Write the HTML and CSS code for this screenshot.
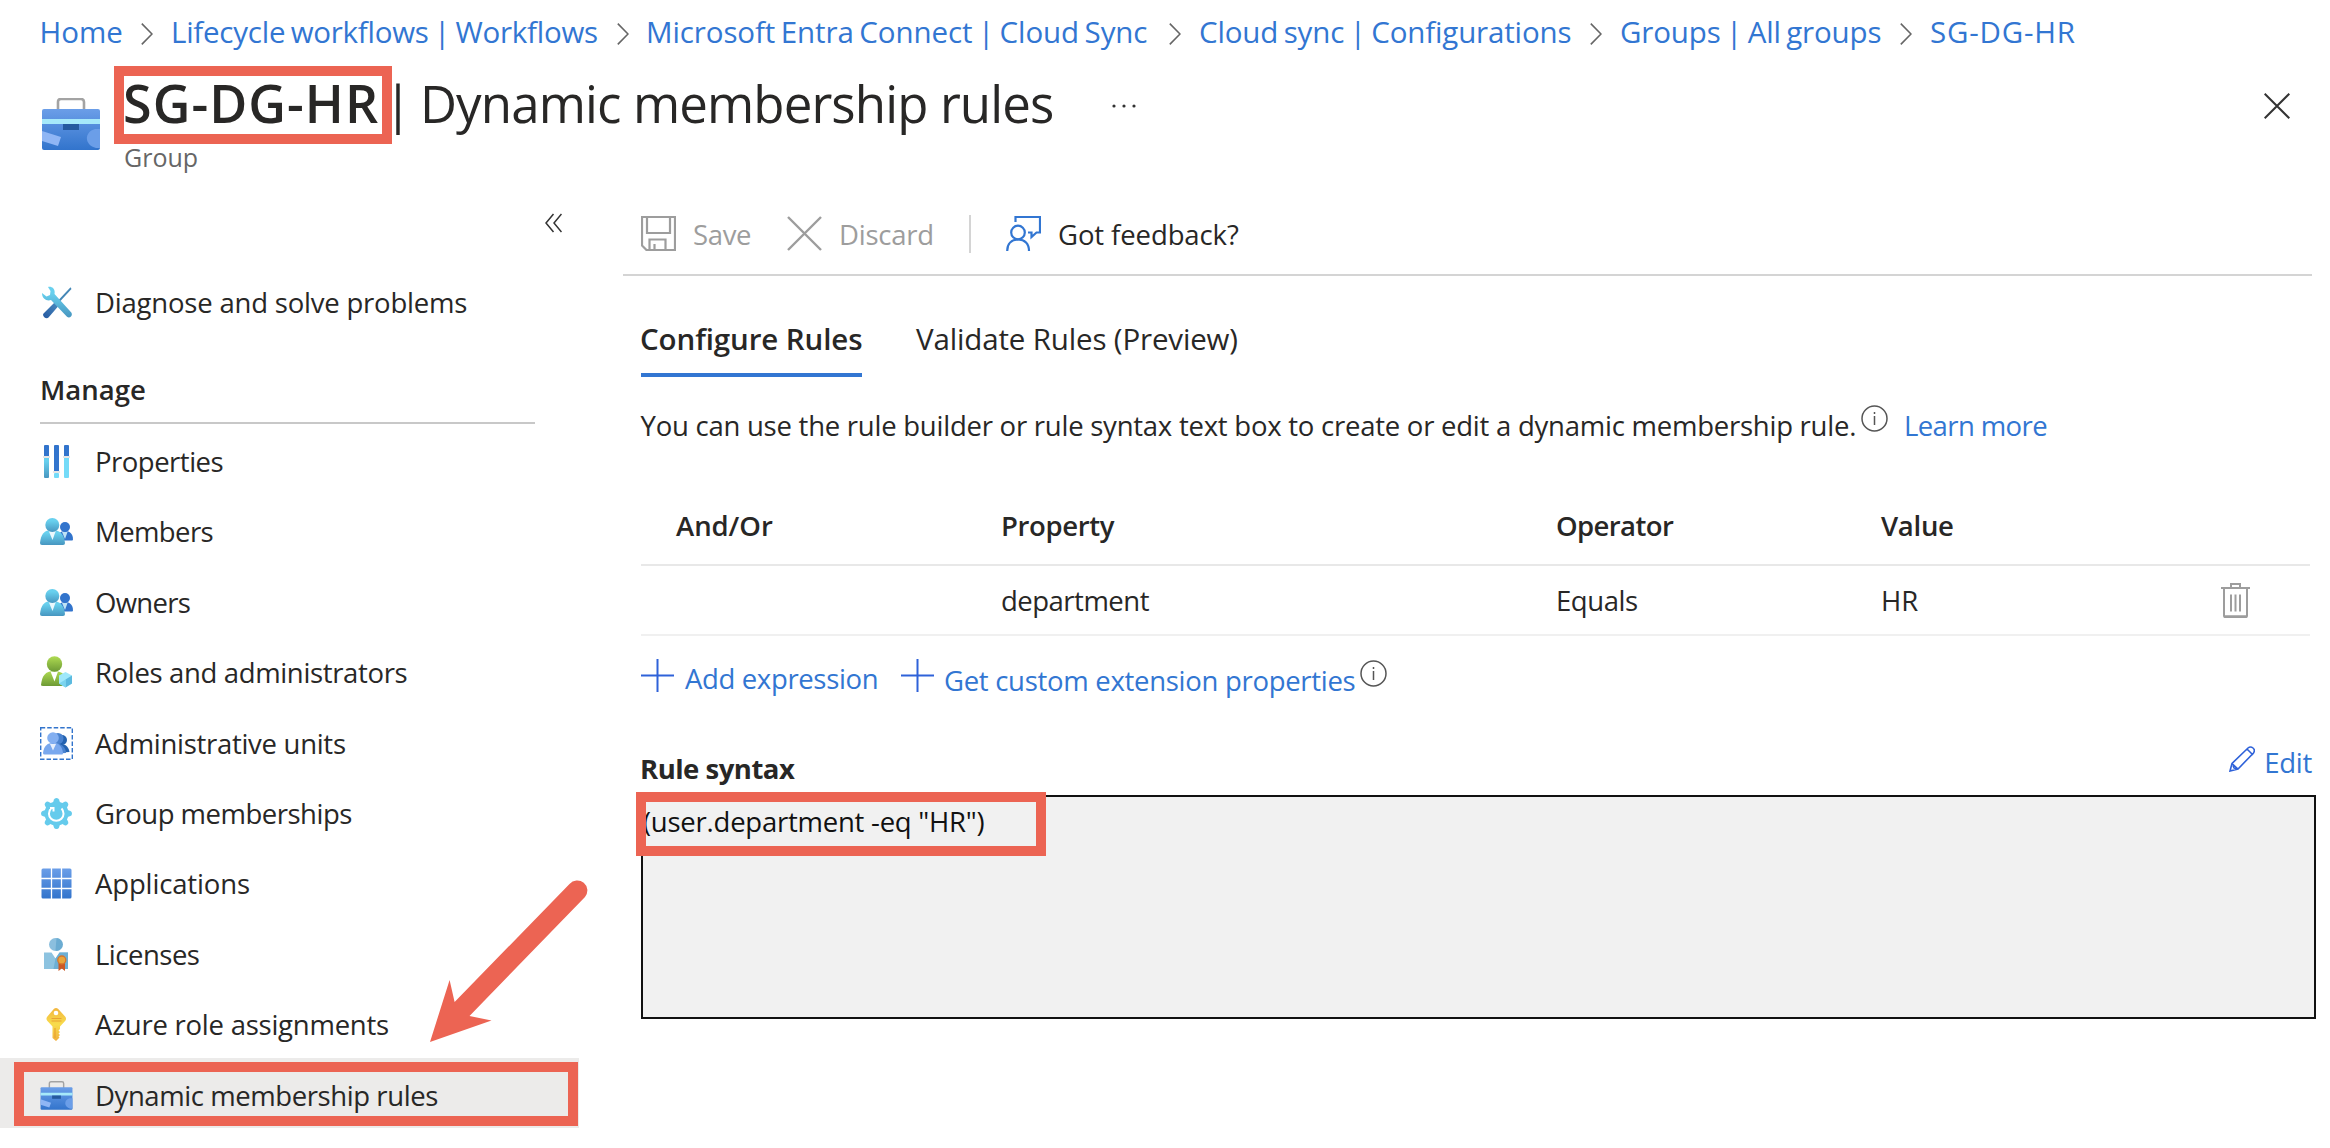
FILE: index.html
```html
<!DOCTYPE html>
<html lang="en">
<head>
<meta charset="utf-8">
<title>SG-DG-HR | Dynamic membership rules</title>
<link rel="stylesheet" href="styles.css">
</head>
<body>
<svg class="defs" aria-hidden="true">
  <defs>
    <linearGradient id="cyan" x1="0" y1="0" x2="0" y2="1"><stop offset=".2" stop-color="#68d0ee"/><stop offset="1" stop-color="#4796c0"/></linearGradient>
    <linearGradient id="green" x1="0" y1="0" x2="0" y2="1"><stop offset="0" stop-color="#afdb52"/><stop offset="1" stop-color="#6d9a35"/></linearGradient>
    <linearGradient id="blue" x1="0" y1="0" x2="0" y2="1"><stop offset="0" stop-color="#6b9ee8"/><stop offset="1" stop-color="#3274cc"/></linearGradient>
    <linearGradient id="gold" x1="0" y1="0" x2="0" y2="1"><stop offset="0" stop-color="#f2b63f"/><stop offset=".5" stop-color="#f8dc4c"/><stop offset="1" stop-color="#f0b03f"/></linearGradient>
    <linearGradient id="navy" x1="1" y1="0" x2="0" y2="1"><stop offset="0" stop-color="#4b8bc0"/><stop offset="1" stop-color="#2458a0"/></linearGradient>
    <symbol id="chevron" viewBox="0 0 12 22"><path d="M.8.6 11 11 .8 21.4" fill="none" stroke="#666" stroke-width="1.6"/></symbol>
    <symbol id="toolbox" viewBox="0 0 60 52">
      <path d="M17 13V4q0-3 3-3h20q3 0 3 3v9" fill="none" stroke="#a3a3a3" stroke-width="2.6"/>
      <rect x="1" y="11" width="58" height="41" rx="2" fill="url(#blue)"/>
      <rect x="1" y="21" width="58" height="5" fill="#a6e9fa"/>
      <rect x="22" y="26" width="16" height="6" fill="#245a9f"/>
      <path d="m1 33 19 6-3 9L1 43z" fill="#8fb6f5"/>
      <path d="M59 31h-5c-11 3-11 16 1 19h4z" fill="#6b9ee8"/>
    </symbol>
    <symbol id="people" viewBox="0 0 33 33">
      <circle cx="25" cy="12" r="5" fill="#3274cc"/><path d="M18 25c0-6 2-9 7-9s8 3 8 8.500q0 1-1 1H18z" fill="#3274cc"/><path d="m22 17 3 7 2.500-7z" fill="#bfe3f5"/>
      <path d="M0 28C1 19 4 15 12 15s12 4 13 13q0 2-2 2H2q-2 0-2-2z" fill="url(#cyan)"/><path d="m8.500 15.500 4 9.500L16 15.500z" fill="#eaf8fd"/>
      <circle cx="12.300" cy="10" r="7" fill="url(#cyan)"/>
    </symbol>
    <symbol id="info" viewBox="0 0 27 27"><circle cx="13.500" cy="13.500" r="12.500" fill="none" stroke="#555" stroke-width="1.500"/><path d="M13.500 11v9M13.500 7v2" stroke="#555" stroke-width="1.500"/></symbol>
    <symbol id="plus" viewBox="0 0 33 33"><path d="M16.500 0v33M0 16.500h33" stroke="#2f62d9" stroke-width="2"/></symbol>
  </defs>
</svg>

<nav class="breadcrumb">
  <a>Home</a><svg><use href="#chevron"/></svg>
  <a class="t25 piped">Lifecycle workflows | Workflows</a><svg><use href="#chevron"/></svg>
  <a class="t10 piped">Microsoft Entra Connect | Cloud Sync</a><svg><use href="#chevron"/></svg>
  <a class="t15 piped">Cloud sync | Configurations</a><svg><use href="#chevron"/></svg>
  <a class="t15 piped">Groups | All groups</a><svg><use href="#chevron"/></svg>
  <a class="wide">SG-DG-HR</a>
</nav>

<header class="title">
  <svg class="title-icon"><use href="#toolbox"/></svg>
  <div class="title-text">
    <h1><b>SG-DG-HR</b><span class="bar">|</span><span class="name">Dynamic membership rules</span></h1>
    <p>Group</p>
  </div>
  <svg class="dots" viewBox="0 0 24 4"><g fill="#333"><circle cx="2" cy="2" r="1.600"/><circle cx="12" cy="2" r="1.600"/><circle cx="22" cy="2" r="1.600"/></g></svg>
  <svg class="close" viewBox="0 0 26 26"><path d="m.7.7 24.600 24.600M25.300.7.7 25.300" stroke="#333" stroke-width="2"/></svg>
</header>

<div class="columns">
  <aside class="sidebar">
    <svg class="collapse" viewBox="0 0 17 20"><path d="M8.500 1 1 10l7.500 9M16.500 1 9 10l7.500 9" fill="none" stroke="#333" stroke-width="1.500"/></svg>
    <a class="item t20">
      <svg viewBox="0 0 33 33">
        <path d="M30.500 1.200 19 13.500l-1.500 3 2-.5L31.500 3z" fill="#4487b6"/><path d="m14.500 16.500 3.500 4-9.500 11c-2 2.500-7-1.500-5-4z" fill="url(#navy)"/>
        <path d="M8 1c4-1 7.500 2 6.500 7l16.800 18.500c2 3-1.500 6.500-4.300 4.300L11 14c-4 1.500-9-1-9-7l4.500 3.500L10 9l.5-4z" fill="url(#cyan)"/>
      </svg>Diagnose and solve problems</a>
    <h2>Manage</h2>
    <a class="item t50">
      <svg viewBox="0 0 33 33"><g fill="#3274cc"><rect x="4" width="5" height="13" rx="1"/><rect x="14" width="5" height="28" rx="1"/><rect x="24" width="5" height="13" rx="1"/></g><g fill="#74dbf8"><rect x="4" y="12" width="5" height="21" rx="1" fill="url(#cyan)"/><rect x="14" y="28" width="5" height="5" rx="1"/><rect x="24" y="12" width="5" height="21" rx="1"/></g><path d="M3 12h7M13 27h7M23 12h7" stroke="#e6e6e6" stroke-width="2"/></svg>Properties</a>
    <a class="item t60"><svg><use href="#people"/></svg>Members</a>
    <a class="item t70"><svg><use href="#people"/></svg>Owners</a>
    <a class="item t35">
      <svg viewBox="0 0 33 33"><path d="M1 29c1-9 4-14 13-14s13 5 13 15H3q-2 0-2-1z" fill="url(#green)"/><path d="m10.500 15.500 4 10 3.500-10z" fill="#fff"/><circle cx="14.500" cy="8" r="7.700" fill="url(#green)"/><path d="m25.500 16 6.500 3.500v8L25.500 31.500 19 27.500v-8z" fill="#9fe8fb"/><path d="m32 19.500-6.500 4v8l6.500-4z" fill="#5cbadf"/><path d="m19 27.500 6.500-4v8z" fill="#7bd4ef"/></svg>Roles and administrators</a>
    <a class="item t30">
      <svg viewBox="0 0 33 33"><rect x=".7" y=".7" width="31.600" height="31.600" fill="none" stroke="#3274cc" stroke-width="1.400" stroke-dasharray="4.500 2"/><circle cx="22" cy="13" r="5" fill="#2563b0"/><path d="M14 26c0-7 4-9 8-9s7 4 7.500 8z" fill="#2563b0"/><circle cx="18" cy="11.500" r="5.500" fill="#4a83d0"/><path d="M10 27c0-8 4-10 8-10s8 4 8 9z" fill="#4a83d0"/><circle cx="13" cy="11" r="5.800" fill="#83aff1"/><path d="M3 26c1-7 4-10 10-10s9 3 10 10q0 1.500-1 1.500H4.500Q3 27.500 3 26z" fill="#79a8ee"/><path d="m10 17 3 6.500 3-6.500z" fill="#e6effc"/></svg>Administrative units</a>
    <a class="item t50">
      <svg viewBox="0 0 33 33"><g fill="#65cbec"><circle cx="16.500" cy="16.500" r="12"/><g id="tooth"><path d="M12.500 7 14 2.500Q14.500 1 16.500 1t2.500 1.500L20.500 7v19L19 30.500q-.5 1.500-2.500 1.500T14 30.500L12.500 26z"/></g><use href="#tooth" transform="rotate(45 16.500 16.500)"/><use href="#tooth" transform="rotate(90 16.500 16.500)"/><use href="#tooth" transform="rotate(135 16.500 16.500)"/></g><path d="M11 11.500a7.300 7.300 0 1 0 10.500 0M10 11h3.500v3.500" fill="none" stroke="#fff" stroke-width="2"/></svg>Group memberships</a>
    <a class="item t15">
      <svg viewBox="0 0 33 33"><rect x="1.500" y="1.500" width="30" height="30" rx="1.500" fill="url(#blue)"/><path d="M11.500 1v31M21.500 1v31M1 11.500h31M1 21.500h31" stroke="#fff" stroke-width="1.300"/></svg>Applications</a>
    <a class="item t50">
      <svg viewBox="0 0 33 33"><circle cx="15.500" cy="6.500" r="6.500" fill="#8bbfde"/><path d="M16.500 0a6.500 6.500 0 0 1 0 13l-1-1z" fill="#6bacd2"/><path d="M4 14.500h7.500l4 6 4-6H28V31H4z" fill="#8dc3e0"/><path d="m15.500 20.500 4-6H28V31H13.500z" fill="#6dafd4"/><path d="M18.500 23h6.500v10l-3.200-2.500-3.300 2.500z" fill="#cb5926"/><circle cx="21.800" cy="22" r="4" fill="#e8a63c" stroke="#d5752d" stroke-width="1.300"/></svg>Licenses</a>
    <a class="item t25">
      <svg viewBox="0 0 33 33"><path d="M14 .8q2-1.500 4 0l7.300 8q1.500 2 0 4L20 18.500v2.500l-1.500 1.500 1.500 1.500-1.500 1.500 1.500 1.500-1.500 1.500 1 1-3.500 3.500-3.500-3V18.500l-5.300-5.700q-1.500-2 0-4z" fill="url(#gold)"/><circle cx="16" cy="5" r="2.300" fill="#fff"/><path d="M11.500 10.500h10M11.500 13h10M15 20v10" stroke="#e9a332" stroke-width="1.200"/></svg>Azure role assignments</a>
    <a class="item active t40"><svg><use href="#toolbox"/></svg>Dynamic membership rules</a>
  </aside>

  <main class="content">
    <div class="toolbar">
      <svg viewBox="0 0 35 35"><path d="M1 1h33v33H5.500L1 29.500zM6 1v16h23V1M8.500 34V23.500h16V34M13.500 34v-6" fill="none" stroke="#9d9d9d" stroke-width="2.200"/></svg>
      <span class="muted t35">Save</span>
      <svg viewBox="0 0 35 35"><path d="m1 1 33 33M34 1 1 34" stroke="#9d9d9d" stroke-width="2.400"/></svg>
      <span class="muted t25">Discard</span>
      <i class="divider"></i>
      <svg viewBox="0 0 35 35"><g fill="none" stroke="#3276d2" stroke-width="2.200"><path d="M9.500 6V1H34v15.500h-3.500l-5 4.500v-4.500H22"/><circle cx="12" cy="16.500" r="6.800"/><path d="M1.200 35c0-7.500 4.500-11.500 11-11.500S23 27.500 23 35"/></g></svg>
      <span class="t10">Got feedback?</span>
    </div>
    <div class="tabs"><b class="t10">Configure Rules</b><span class="t15">Validate Rules (Preview)</span></div>
    <div class="hint"><span class="t25">You can use the rule builder or rule syntax text box to create or edit a dynamic membership rule.</span><svg><use href="#info"/></svg><a class="t60">Learn more</a></div>
    <div class="row head"><span class="t05">And/Or</span><span class="t35">Property</span><span class="t60">Operator</span><span class="t30">Value</span></div>
    <div class="row"><span></span><span class="t50">department</span><span class="t45">Equals</span><span>HR</span>
      <svg viewBox="0 0 29 35"><path d="M0 5h29M10 5V1h9v4M3 5v28q0 1 1 1h21q1 0 1-1V5M10 11.500v17M14.500 11.500v17M19 11.500v17" fill="none" stroke="#9d9d9d" stroke-width="2"/><path d="M3 33.500h23" stroke="#9d9d9d" stroke-width="2.500"/></svg></div>
    <div class="actions">
      <svg><use href="#plus"/></svg><a class="t35">Add expression</a>
      <svg><use href="#plus"/></svg><a class="custom t30">Get custom extension properties</a>
      <svg class="info"><use href="#info"/></svg>
    </div>
    <div class="syntax-head"><b class="t50">Rule syntax</b>
      <a class="edit t30"><svg viewBox="0 0 26 26"><path d="m1 25 2-7.500L19 2q2.500-2 5 0t.5 5L9 23zM3 17.500 9 23M18 3l6 6M4 19.500l1 2.500 2.500 1" fill="none" stroke="#2f62d9" stroke-width="1.600"/></svg>Edit</a></div>
    <div class="syntax-box"><span class="t25">(user.department -eq "HR")</span></div>
  </main>
</div>

<div class="mark mark-title"></div>
<div class="mark mark-item"></div>
<div class="mark mark-rule"></div>
<svg class="arrow" viewBox="0 0 159 164"><path d="m0 162 19.600-62 5 22L139.500 4a10 10 0 0 1 15.500 13L39.500 136l22 4.500z" fill="#ec6453"/></svg>
</body>
</html>
```
FILE: styles.css
```css
* { box-sizing: border-box; }
body {
  margin: 0; width: 2330px; height: 1148px; overflow: hidden; position: relative;
  background: #fff; color: #282726;
  font: 27.5px/40px "Open Sans", "Noto Sans", sans-serif; white-space: nowrap;
}
h1, h2, p { margin: 0; }
b, h2 { font-weight: 600; }
svg { display: block; flex: none; }
.defs { position: absolute; width: 0; height: 0; }
a { color: #3276d2; }

/* letter-spacing steps */
.t05 { letter-spacing: -.05px; }
.t10 { letter-spacing: -.1px; }
.t15 { letter-spacing: -.15px; }
.t20 { letter-spacing: -.2px; }
.t25 { letter-spacing: -.24px; }
.t30 { letter-spacing: -.29px; }
.t35 { letter-spacing: -.35px; }
.t40 { letter-spacing: -.42px; }
.t45 { letter-spacing: -.44px; }
.t50 { letter-spacing: -.5px; }
.t60 { letter-spacing: -.6px; }
.t70 { letter-spacing: -.7px; }
.wide { letter-spacing: .8px; }
.piped { word-spacing: -2px; }

.breadcrumb {
  display: grid; align-items: center; height: 63px; padding: 1px 0 0 39.5px; font-size: 29.5px;
  grid-template-columns: 101.5px 30px 446px 29px 523px 30px 391px 30px 280px 30px auto;
}
.breadcrumb svg { width: 12px; height: 22px; margin-top: 3px; }

.title { display: flex; height: 131px; padding: 10px 40px 0; }
.title-icon { width: 60px; height: 52px; margin: 25px -1px 0 1px; }
.title-text { margin-left: 23px; width: 989px; }
.title h1 { display: grid; grid-template-columns: 261px 36px auto; font-size: 51px; font-weight: 400; line-height: 60px; }
.title b { font-size: 52px; letter-spacing: 1.04px; }
.title .name { letter-spacing: -.88px; }
.title p { margin-top: 7px; padding-left: 1px; font-size: 25px; line-height: 34px; color: #666; }
.dots { width: 24px; height: 4px; margin-top: 31px; }
.close { width: 26px; height: 26px; margin: 20px 0 0 auto; }

.columns { display: flex; }
.sidebar { width: 623px; }
.collapse { width: 17px; height: 20px; margin: 19px 0 0 545px; }
.collapse + .item { margin-top: 32px; }
.item { display: flex; align-items: center; height: 70.4px; width: 579px; padding: 5px 0 0 40px; color: #282726; }
.item svg { width: 33px; height: 33px; margin: -1px 22px 0 0; }
.item.active { background: #ecebea; }
.sidebar h2 { width: 495px; height: 89px; margin-left: 40px; padding-top: 35px; border-bottom: 2px solid #c8c8c8; font-size: 27.5px; }

.content { width: 1707px; }
.toolbar {
  display: grid; align-items: center; height: 82px; width: 1689px; padding-left: 18px; border-bottom: 2px solid #d4d4d4;
  grid-template-columns: 52px 94px 52px 130px 37px 52px auto;
}
.toolbar svg { width: 35px; height: 35px; margin-bottom: 1px; }
.toolbar span { padding-top: 2px; }
.muted { color: #9d9d9d; }
.divider { width: 2px; height: 38px; background: #d4d4d4; }
.tabs { display: flex; gap: 54px; margin-left: 18px; padding-top: 43px; font-size: 29.5px; }
.tabs b { width: 221px; height: 58px; border-bottom: 4px solid #3276d2; text-indent: -1px; }
.hint { display: grid; grid-template-columns: 1220px 43px auto; margin: 29px 0 0 18px; height: 40px; }
.hint span { text-indent: -.5px; }
.hint svg { width: 27px; height: 27px; margin-top: -1px; }
.row {
  display: grid; grid-template-columns: 325px 555px 325px 340px auto; align-items: center;
  height: 70px; width: 1669px; margin-left: 18px; padding-left: 35px; border-bottom: 2px solid #f0f0f0;
}
.row.head { height: 80px; margin-top: 40px; font-weight: 600; border-color: #e8e8e8; }
.row span { padding-top: 1px; }
.row svg { width: 29px; height: 35px; }
.actions { display: grid; grid-template-columns: 44px 216px 43px 416px auto; margin: 22px 0 0 18px; height: 48px; }
.actions svg { width: 33px; height: 33px; margin-top: 1px; }
.actions a { padding-top: 1px; }
.actions .custom { padding-top: 3px; }
.actions .info { width: 27px; height: 27px; margin-top: 2px; }
.syntax-head { display: flex; justify-content: space-between; height: 89px; width: 1671px; margin-left: 18px; padding-top: 43px; }
.syntax-head b { font-weight: 700; text-indent: -1px; }
.edit { display: flex; margin-top: -6px; }
.edit svg { width: 26px; height: 26px; margin: 3px 9px 0 0; }
.syntax-box { width: 1675px; height: 224px; margin-left: 18px; padding: 5px 0; border: 2px solid #111; background: #f1f1f1; color: #111; }

/* annotations laid over the page */
.mark { position: absolute; border: 10px solid #ec6453; }
.mark-title { left: 114px; top: 66px; width: 278px; height: 78px; }
.mark-item { left: 14px; top: 1062px; width: 564px; height: 64px; }
.mark-rule { left: 636px; top: 792px; width: 410px; height: 64px; }
.arrow { position: absolute; left: 430px; top: 880px; width: 159px; height: 164px; }
```
